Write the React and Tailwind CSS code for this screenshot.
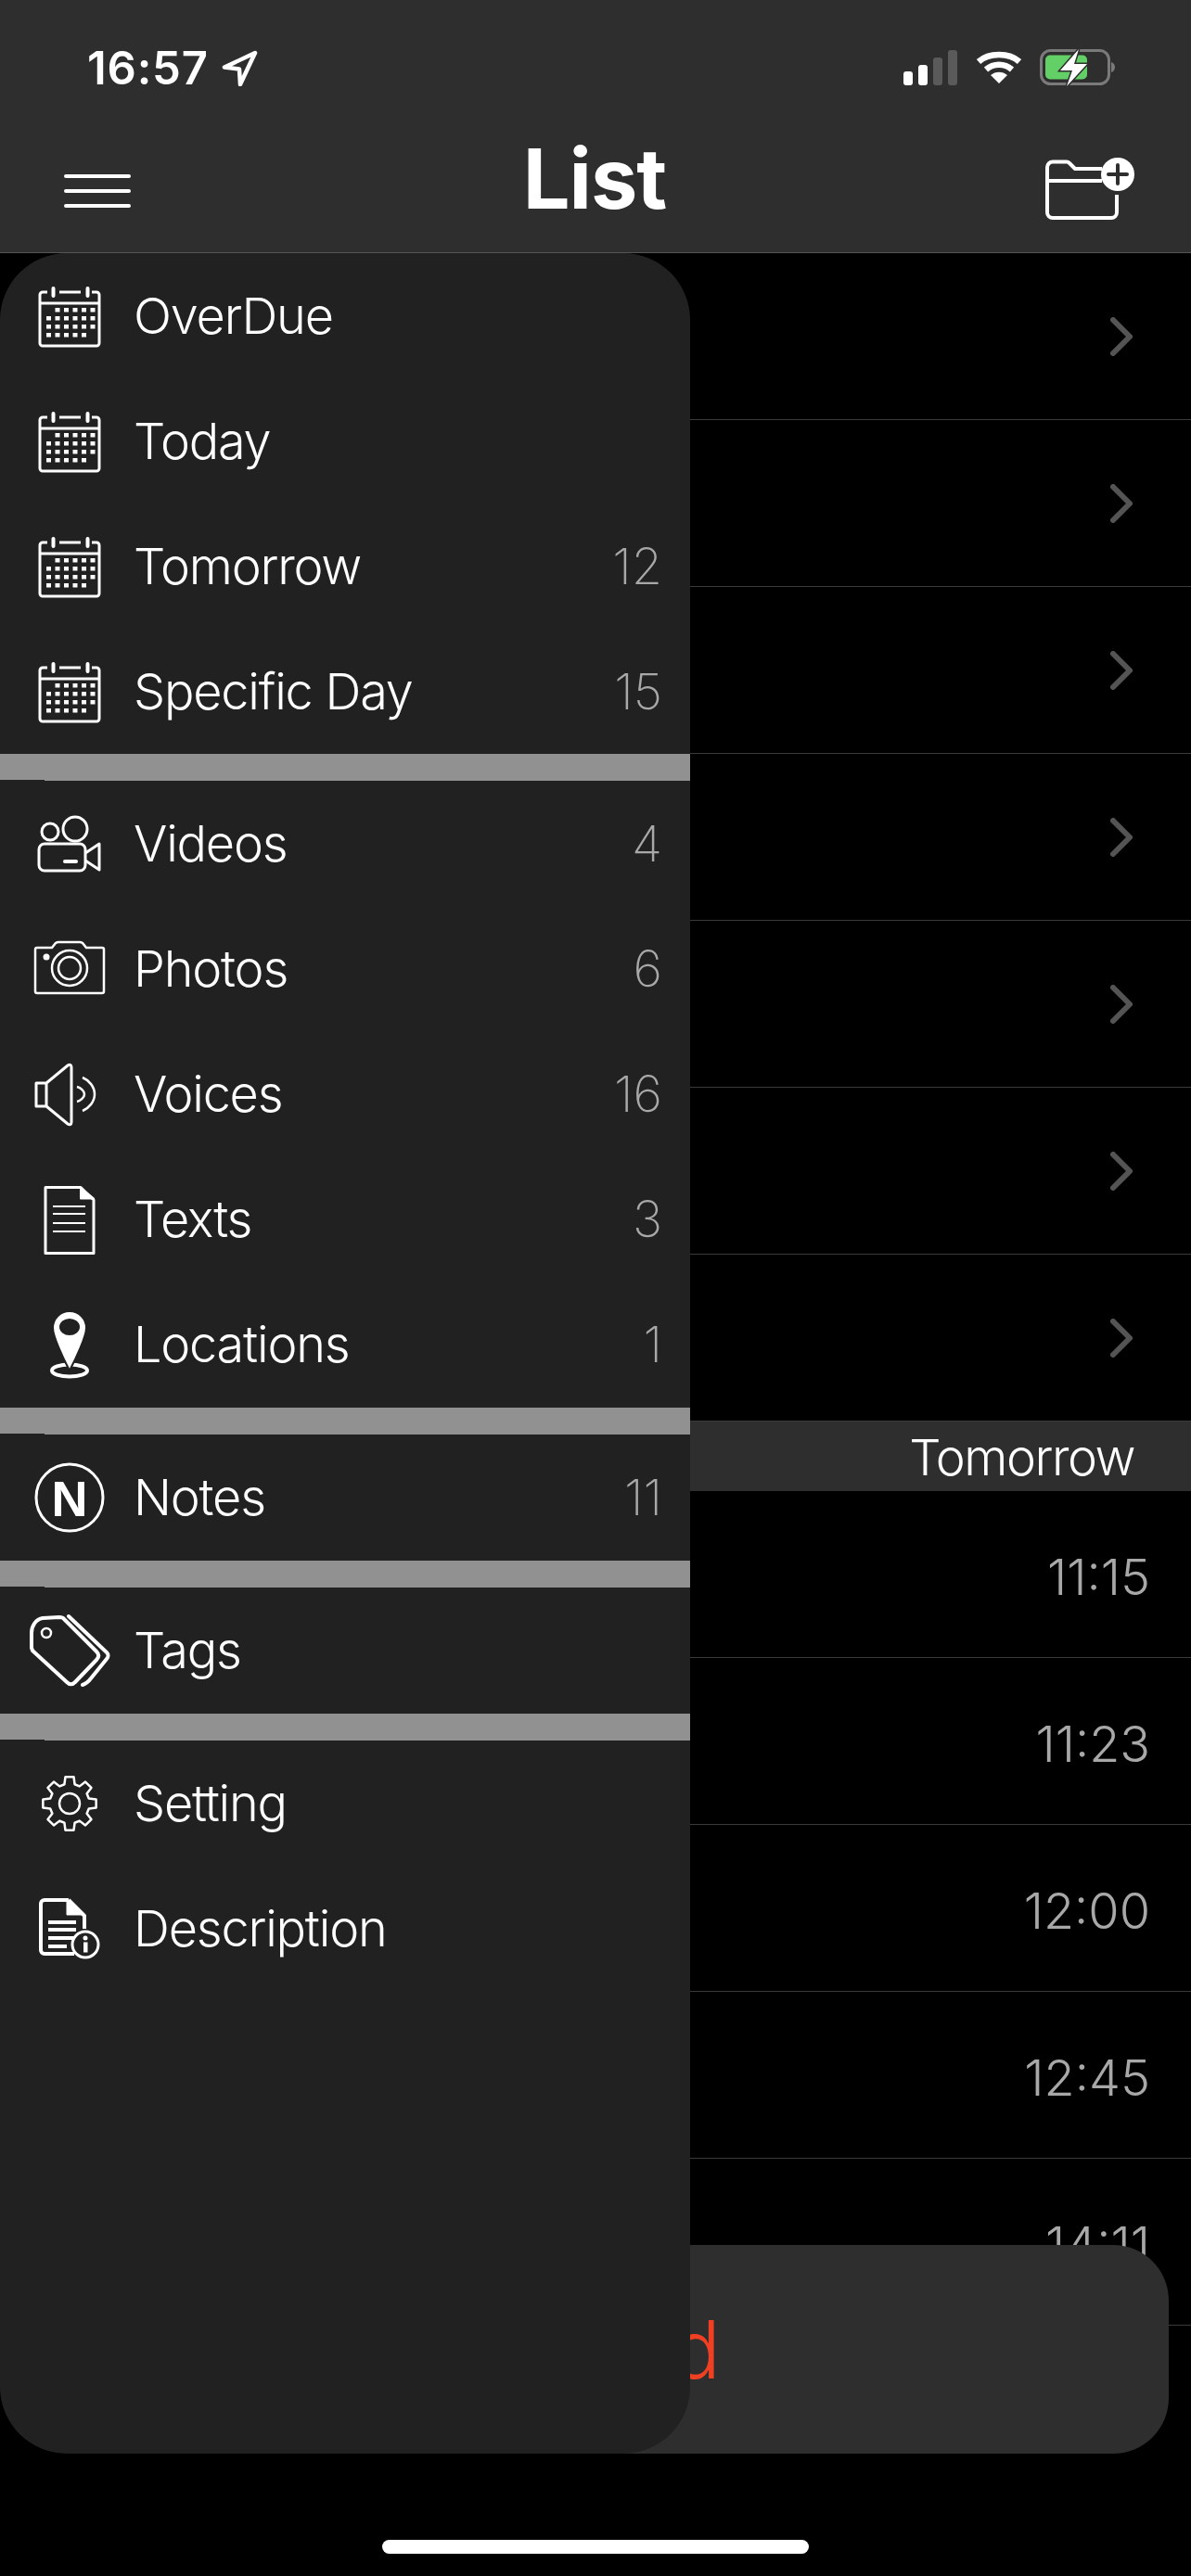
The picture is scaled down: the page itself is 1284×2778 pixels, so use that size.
import React from 'react';

const Calendar = () => {
  const dots = [];
  const xs = [20, 29.5, 39, 48.5, 58, 67.5];
  const ys = [36, 45, 54, 63];
  ys.forEach((y, r) => {
    xs.forEach((x, c) => {
      if ((r === 0 && c === 0) || (r === 3 && c === 5)) return;
      dots.push(<rect key={`${r}-${c}`} x={x} y={y} width="5" height="4.5" fill="#fff" />);
    });
  });
  return (
    <g fill="none" stroke="#fff">
      <path d="M21 19H16a3 3 0 0 0-3 3v52a3 3 0 0 0 3 3h58a3 3 0 0 0 3-3V22a3 3 0 0 0-3-3h-5M34 19h23M13 31h64" strokeWidth="3" />
      <path d="M27.5 15v8M64.500 15v8" strokeWidth="4" strokeLinecap="round" />
      <g stroke="none">{dots}</g>
    </g>
  );
};

const Videos = () => (
  <g fill="none" stroke="#fff" strokeWidth="3">
    <circle cx="24" cy="32" r="9" />
    <circle cx="51" cy="29" r="13" />
    <rect x="12" y="45" width="50" height="29" rx="6" />
    <path d="M62 55l15-10v28L62 63" strokeLinejoin="round" />
    <path d="M40 64h12" strokeWidth="4" strokeLinecap="round" />
  </g>
);

const Photos = () => (
  <g fill="none" stroke="#fff" strokeWidth="2.5">
    <path d="M10 22h16l4-5c1-.7 2-1 3-1h23c1 0 2 .3 3 1l4 5h17a2 2 0 0 1 2 2v45a2 2 0 0 1-2 2H10a2 2 0 0 1-2-2V24a2 2 0 0 1 2-2z" />
    <circle cx="45" cy="44" r="19" />
    <circle cx="45" cy="44" r="12" />
    <circle cx="20" cy="32" r="3.500" fill="#fff" stroke="none" />
  </g>
);

const Voices = () => (
  <g fill="none" stroke="#fff" strokeWidth="3" strokeLinejoin="round">
    <path d="M20 33H9v25h11M20 33l23-19c2-1.500 4-1 4 2v59c0 3-2 3.500-4 2L20 58z" />
    <path d="M53 37c4 1 8 4.500 8 8s-4 7-8 8" strokeWidth="2.500" />
    <path d="M59 27c7 3 13 10 13 18s-6 15-13 18" strokeWidth="2.500" />
  </g>
);

const Texts = () => (
  <g fill="none" stroke="#fff">
    <path d="M57 10.500H19v71h52V24L57 10.500z" strokeWidth="3" strokeLinejoin="round" />
    <path d="M57 11v11.500h14z" fill="#fff" strokeWidth="2" strokeLinejoin="round" />
    <path d="M27 31h35M27 39h35M27 49h35M27 58h35" strokeWidth="2" />
  </g>
);

const Locations = () => (
  <g>
    <ellipse cx="45" cy="73" rx="19" ry="6.500" fill="none" stroke="#fff" strokeWidth="4" />
    <path
      d="M45 9c10 0 18 8 18 18 0 9-11 33-18 46-7-13-18-37-18-46 0-10 8-18 18-18zm0 9c-5.500 0-10 3.600-10 8s4.500 8 10 8 10-3.600 10-8-4.500-8-10-8z"
      fill="#fff"
      fillRule="evenodd"
      stroke="#212121"
      strokeWidth="2"
    />
  </g>
);

const Notes = () => (
  <g>
    <circle cx="45" cy="45" r="36" fill="none" stroke="#fff" strokeWidth="3" />
    <text x="45" y="65" textAnchor="middle" fontSize="54" fontWeight="700" fontFamily="'Liberation Sans', sans-serif" fill="#fff">N</text>
  </g>
);

const Tags = () => (
  <g fill="none" stroke="#fff" strokeWidth="4" strokeLinejoin="round">
    <path d="M4 42V26c0-8 5-15 12-16l18-1c2 0 4 .5 5 2l35 35c3 3 3 6 0 9L51 79c-3 3-6 3-9 0L5 45z" />
    <circle cx="20" cy="26" r="5" strokeWidth="2.500" />
    <path d="M44 8l41 39c2 2 2 5 0 7L68 75c-3 4-6 6-9 7" strokeLinecap="round" />
  </g>
);

// 8 teeth
const gearPath = () => {
  const pts = [];
  for (let i = 0; i < 8; i++) {
    const a = (i * Math.PI) / 4 - Math.PI / 2;
    const d = (n) => (n * Math.PI) / 180;
    [[21.5, -15], [29, -9], [29, 9], [21.5, 15]].forEach(([r, off]) => {
      pts.push(`${(45 + r * Math.cos(a + d(off))).toFixed(2)} ${(45 + r * Math.sin(a + d(off))).toFixed(2)}`);
    });
  }
  return `M${pts.join('L')}Z`;
};

const Setting = () => (
  <g fill="none" stroke="#fff" strokeWidth="2.500" strokeLinejoin="round">
    <path d={gearPath()} />
    <circle cx="45" cy="45" r="11" />
  </g>
);

const Description = () => (
  <g fill="none" stroke="#fff">
    <path d="M44 14H18a4 4 0 0 0-4 4v50a4 4 0 0 0 4 4h32M44 14l17 17v14" strokeWidth="4" strokeLinejoin="round" />
    <path d="M42 14v16h19z" fill="#fff" strokeWidth="1" strokeLinejoin="round" />
    <path d="M22 38h30M22 46h30M22 55h28M22 64h20" strokeWidth="4" />
    <circle cx="62" cy="62" r="14" fill="#212121" strokeWidth="3" />
    <circle cx="62" cy="55" r="2.500" fill="#fff" stroke="none" />
    <rect x="60" y="59.500" width="4.500" height="11" fill="#fff" stroke="none" />
  </g>
);

const menu = [
  [
    { label: 'OverDue', icon: Calendar },
    { label: 'Today', icon: Calendar },
    { label: 'Tomorrow', icon: Calendar, count: 12 },
    { label: 'Specific Day', icon: Calendar, count: 15 },
  ],
  [
    { label: 'Videos', icon: Videos, count: 4 },
    { label: 'Photos', icon: Photos, count: 6 },
    { label: 'Voices', icon: Voices, count: 16 },
    { label: 'Texts', icon: Texts, count: 3 },
    { label: 'Locations', icon: Locations, count: 1, tall: true },
  ],
  [{ label: 'Notes', icon: Notes, count: 11, tall: true }],
  [{ label: 'Tags', icon: Tags, tall: true }],
  [
    { label: 'Setting', icon: Setting },
    { label: 'Description', icon: Description },
  ],
];

const times = ['11:15', '11:23', '12:00', '12:45', '14:11'];

const MenuRow = ({ item }) => {
  const Icon = item.icon;
  return (
    <div className={`${item.tall ? 'h-[136px]' : 'h-[135px]'} flex items-center pl-[30px] pr-[30px]`}>
      <svg width="90" height="90" viewBox="0 0 90 90" className="shrink-0">
        <Icon />
      </svg>
      <span className="ml-[24px] text-[54px] leading-none font-[350] tracking-[-1.2px] text-white">{item.label}</span>
      {item.count != null && (
        <span className="ml-auto text-[54px] leading-none font-[250] text-[#a8a8a8]">{item.count}</span>
      )}
    </div>
  );
};

const Separator = () => (
  <div className="h-[29px] bg-[#919191] flex items-end">
    <div className="w-[48px] h-px bg-[#212121]" />
  </div>
);

const App = () => {
  return (
    <div className="relative w-[1284px] h-[2778px] overflow-hidden bg-black antialiased font-[family-name:Inter,sans-serif]">
      <header className="h-[273px] bg-[#2e2e2e] border-b border-[#555555] flex flex-col">
        <div className="h-[42px] mt-[52px] pl-[94px] pr-[81px] flex items-center justify-between">
          <div className="flex items-center">
            <span className="text-[49px] leading-none font-semibold text-white tracking-[0.8px]">16:57</span>
            <svg width="40" height="40" viewBox="0 0 40 40" className="ml-[14px]">
              <path d="M36 4L3 19.500l16 2 1 16.500z" fill="none" stroke="#fff" strokeWidth="4.500" strokeLinejoin="round" />
            </svg>
          </div>
          <div className="flex items-center">
            <svg width="58" height="38" viewBox="0 0 58 38">
              <rect x="0" y="23" width="10" height="15" rx="3" fill="#fff" />
              <rect x="16" y="16" width="10" height="22" rx="3" fill="#fff" />
              <rect x="32" y="8" width="10" height="30" rx="3" fill="#5a5a5a" />
              <rect x="48" y="0" width="10" height="38" rx="3" fill="#5a5a5a" />
            </svg>
            <svg width="52" height="38" viewBox="0 0 52 38" className="ml-[19px]">
              <path d="M26 36L17 27c5-4.500 13-4.500 18 0z" fill="#fff" />
              <path d="M12 21c8-7 20-7 28 0M4 12.500C15 2.500 37 2.500 48 12.500" fill="none" stroke="#fff" strokeWidth="6.500" />
            </svg>
            <svg width="82" height="40" viewBox="0 0 82 40" className="ml-[18px]">
              <rect x="1.500" y="1.500" width="73" height="36" rx="10" fill="none" stroke="#7a7a7a" strokeWidth="3" />
              <path d="M77 14c2.500.8 4 3 4 5.500s-1.500 4.700-4 5.500z" fill="#7a7a7a" />
              <rect x="6" y="6.500" width="45" height="26" rx="5" fill="#62d067" />
              <path d="M42 0L22 23h13l-6 17 22-24H37z" fill="#fff" stroke="#2e2e2e" strokeWidth="3" paintOrder="stroke" />
            </svg>
          </div>
        </div>
        <div className="grid grid-cols-3 items-center h-[116px] mt-[54px]">
          <div className="pl-[69px] flex flex-col gap-[12px]">
            <div className="w-[72px] h-[4px] rounded-full bg-white" />
            <div className="w-[72px] h-[4px] rounded-full bg-white" />
            <div className="w-[72px] h-[4px] rounded-full bg-white" />
          </div>
          <h1 className="text-center text-[90px] leading-none font-bold tracking-[-1px] text-white -mt-[26px] pr-[2px]">List</h1>
          <svg width="98" height="68" viewBox="0 0 98 68" className="justify-self-end mr-[60px] -mt-[5px]">
            <path d="M62 12H33l-6-6c-1-1-2-1.500-3-1.500H9a6 6 0 0 0-6 6V59a6 6 0 0 0 6 6h63a6 6 0 0 0 6-6V40" fill="none" stroke="#fff" strokeWidth="4" strokeLinejoin="round" />
            <path d="M3 25h59" fill="none" stroke="#fff" strokeWidth="4" />
            <circle cx="79" cy="18" r="18" fill="#fff" />
            <path d="M79 8v20M69 18h20" stroke="#2e2e2e" strokeWidth="4" strokeLinecap="round" />
          </svg>
        </div>
      </header>

      <main>
        {Array.from({ length: 7 }).map((_, i) => (
          <div key={i} className="h-[180px] flex items-center justify-end pr-[63px] border-b border-[#3a3a3a]">
            <svg width="24" height="42" viewBox="0 0 24 42">
              <path d="M3 3l18 18L3 39" fill="none" stroke="#545454" strokeWidth="6" strokeLinecap="round" strokeLinejoin="round" />
            </svg>
          </div>
        ))}
        <div className="h-[75px] bg-[#2e2e2e] flex items-center justify-end pr-[61px] pt-[3px]">
          <span className="text-[54px] leading-none font-[350] tracking-[-1.5px] text-white">Tomorrow</span>
        </div>
        {times.map((t) => (
          <div key={t} className="h-[180px] flex items-center justify-end pr-[44px] pt-[6px] border-b border-[#3a3a3a]">
            <span className="text-[54px] leading-none font-light text-[#a8a8a8]">{t}</span>
          </div>
        ))}
      </main>

      {/* floating action, mostly hidden by the drawer */}
      <div className="absolute left-[24px] right-[24px] top-[2421px] h-[225px] rounded-[60px] bg-[#2e2e2e] flex items-center justify-center pr-[14px]">
        <span className="text-[86px] leading-none font-light text-[#f04023]">Record</span>
      </div>

      {/* drawer */}
      <aside className="absolute left-0 top-[273px] w-[744px] h-[2373px] rounded-[72px] bg-[#212121] overflow-hidden">
        {menu.map((section, i) => (
          <div key={i}>
            {i > 0 && <Separator />}
            {section.map((item) => (
              <MenuRow key={item.label} item={item} />
            ))}
          </div>
        ))}
      </aside>

      <div className="absolute left-[412px] top-[2739px] w-[460px] h-[15px] rounded-full bg-white" />
    </div>
  );
};

export default App;
